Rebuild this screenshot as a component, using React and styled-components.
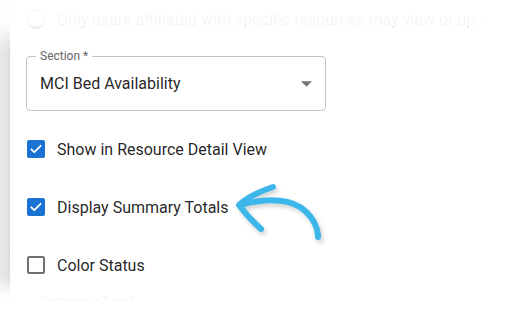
import React from "react";
import styled, { createGlobalStyle } from "styled-components";

const Global = createGlobalStyle`
  html, body { margin: 0; padding: 0; background: #fff; overflow: hidden; }
  body { font-family: Roboto, "Liberation Sans", Arial, sans-serif; }
`;

const Page = styled.div`
  position: relative;
  display: flex;
  width: 523px;
  height: 315px;
  overflow: hidden;
  background: #fff;
`;

const Strip = styled.div`
  width: 10px;
  flex: none;
  background: linear-gradient(90deg, #e8e8e8 0%, #e3e3e3 70%, #d9d9d9 100%);
`;

const Card = styled.div`
  flex: 1;
  display: flex;
  flex-direction: column;
  padding-left: 16px;
  background: #fff;
  & > * { flex: none; }
`;

const RadioRow = styled.div`
  display: flex;
  align-items: center;
  height: 38px;
  gap: 11px;
  white-space: nowrap;
  overflow: hidden;
  -webkit-mask-image: linear-gradient(90deg, #000 440px, transparent 462px);
  mask-image: linear-gradient(90deg, #000 440px, transparent 462px);
`;

const RadioCircle = styled.span`
  width: 16px;
  height: 16px;
  border: 2px solid #8a8a8a;
  border-radius: 50%;
  flex: none;
`;

const RadioText = styled.span`
  font-size: 16px;
  color: rgba(0, 0, 0, 0.6);
`;

const Outlined = styled.div`
  position: relative;
  box-sizing: border-box;
  width: 300px;
  height: ${(p) => p.$h}px;
  margin-top: ${(p) => p.$mt}px;
  border: 1px solid #c4c4c4;
  border-radius: 4px;
  display: flex;
  align-items: center;
  padding: 0 13px;
`;

const Legend = styled.span`
  position: absolute;
  left: 9px;
  top: -8px;
  padding: 0 4px;
  background: #fff;
  font-size: 12px;
  line-height: 14px;
  color: #666;
`;

const Value = styled.span`
  flex: 1;
  font-size: 16px;
  color: rgba(0, 0, 0, 0.87);
`;

const CheckList = styled.div`
  display: flex;
  flex-direction: column;
  gap: 34px;
  margin-top: 26px;
`;

const CheckRow = styled.label`
  display: flex;
  align-items: center;
  height: 24px;
  gap: 12px;
  padding-left: 1px;
`;

const Box = styled.span`
  box-sizing: border-box;
  width: 18px;
  height: 18px;
  border-radius: 2px;
  flex: none;
  display: flex;
  align-items: center;
  justify-content: center;
  background: ${(p) => (p.$on ? "#1a73d2" : "#fff")};
  border: ${(p) => (p.$on ? "none" : "2px solid #707070")};
`;

const Label = styled.span`
  font-size: 16px;
  color: rgba(0, 0, 0, 0.87);
`;

const Fade = styled.div`
  position: absolute;
  left: 0;
  right: 0;
  pointer-events: none;
  ${(p) =>
    p.$top
      ? `top: 0; height: 52px; background: linear-gradient(180deg, rgba(255,255,255,0.97) 0px, rgba(255,255,255,0.93) 24px, rgba(255,255,255,0) 52px);`
      : `bottom: 0; height: 40px; background: linear-gradient(180deg, rgba(255,255,255,0) 0px, rgba(255,255,255,0.9) 20px, #fff 28px);`}
`;

const ArrowSvg = styled.svg`
  position: absolute;
  left: 0;
  top: 0;
  width: 523px;
  height: 315px;
  pointer-events: none;
  overflow: visible;
`;

const Check = () => (
  <svg width="14" height="14" viewBox="0 0 24 24">
    <path d="M4 12.5l5 5L20 6.5" fill="none" stroke="#fff" strokeWidth="3" strokeLinecap="round" strokeLinejoin="round" />
  </svg>
);

const rows = [
  { label: "Show in Resource Detail View", on: true },
  { label: "Display Summary Totals", on: true },
  { label: "Color Status", on: false },
];

export default function App() {
  return (
    <>
      <Global />
      <Page>
        <Strip />
        <Card>
          <RadioRow>
            <RadioCircle />
            <RadioText>Only users affiliated with specific resources may view or update</RadioText>
          </RadioRow>
          <Outlined $h={55} $mt={18}>
            <Legend>Section *</Legend>
            <Value>MCI Bed Availability</Value>
            <svg width="11" height="6" viewBox="0 0 10 5">
              <path d="M0 0l5 5 5-5z" fill="#757575" />
            </svg>
          </Outlined>
          <CheckList>
            {rows.map((r) => (
              <CheckRow key={r.label}>
                <Box $on={r.on}>{r.on && <Check />}</Box>
                <Label>{r.label}</Label>
              </CheckRow>
            ))}
          </CheckList>
          <Outlined $h={55} $mt={24}>
            <Legend>Comments Type *</Legend>
          </Outlined>
        </Card>
        <Fade $top />
        <Fade />
        <ArrowSvg viewBox="0 0 523 315">
          <defs>
            <filter id="sh" x="-20%" y="-20%" width="140%" height="140%">
              <feDropShadow dx="2" dy="3" stdDeviation="2" floodColor="#000" floodOpacity="0.18" />
            </filter>
          </defs>
          <g fill="none" stroke="#3cb6ea" strokeWidth="6" strokeLinecap="round" strokeLinejoin="round" filter="url(#sh)">
            <path d="M240 205 C 262 199, 285 198, 300 207 C 312 215, 318 227, 318 237" />
            <path d="M273 187 C 261 191, 248 197, 239 205 C 245 213, 253 222, 261 229" />
          </g>
        </ArrowSvg>
      </Page>
    </>
  );
}
